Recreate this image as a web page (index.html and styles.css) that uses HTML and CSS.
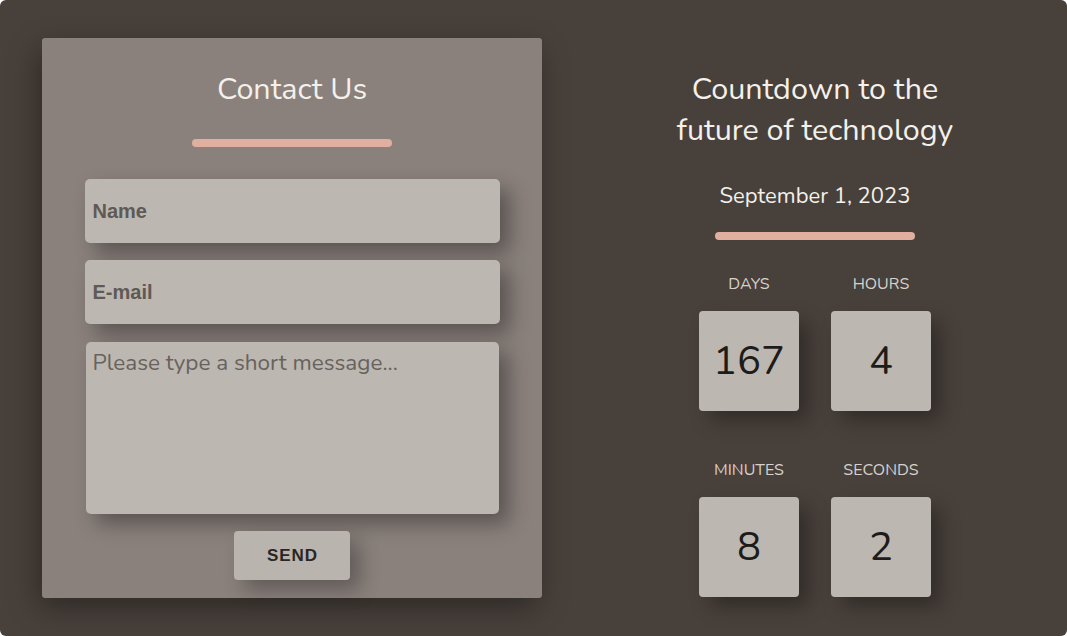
FILE: index.html
```html
<!DOCTYPE html>
<html lang="en">
<head>
<meta charset="utf-8">
<title>Contact & Countdown</title>
<link rel="stylesheet" href="styles.css">
</head>
<body>
<main class="page">
  <section class="card">
    <h2 class="card-title">Contact Us</h2>
    <div class="bar"></div>
    <form class="form">
      <input class="field" type="text" placeholder="Name">
      <input class="field" type="email" placeholder="E-mail">
      <textarea class="message" placeholder="Please type a short message..."></textarea>
      <button class="send" type="button">SEND</button>
    </form>
  </section>
  <section class="countdown">
    <h1 class="cd-title">Countdown to the<br>future of technology</h1>
    <p class="cd-date">September 1, 2023</p>
    <div class="bar bar-right"></div>
    <div class="grid">
      <div class="unit"><span class="label">DAYS</span><div class="box">167</div></div>
      <div class="unit"><span class="label">HOURS</span><div class="box">4</div></div>
      <div class="unit"><span class="label">MINUTES</span><div class="box">8</div></div>
      <div class="unit"><span class="label">SECONDS</span><div class="box">2</div></div>
    </div>
  </section>
</main>
</body>
</html>
```
FILE: styles.css
```css
html, body { margin: 0; padding: 0; background: #ffffff; }
body { font-family: "Nunito", "Lato", "Noto Sans", sans-serif; }
.page {
  width: 1067px;
  height: 636px;
  box-sizing: border-box;
  background: #48403b;
  border-radius: 6px;
  display: flex;
  align-items: flex-start;
  padding: 38px 0 0 42px;
}
.card {
  width: 500px;
  height: 560px;
  box-sizing: border-box;
  background: #8a817c;
  border-radius: 3px;
  box-shadow: -4px 10px 30px rgba(0,0,0,0.35);
  display: flex;
  flex-direction: column;
  align-items: center;
  padding-top: 33px;
}
.card-title {
  margin: 0;
  font-weight: 400;
  font-size: 30.5px;
  line-height: 36px;
  color: #f4f0ea;
}
.bar {
  width: 200px;
  height: 8px;
  border-radius: 4px;
  background: #e0afa0;
  margin-top: 32px;
}
.form {
  display: flex;
  flex-direction: column;
  align-items: center;
  margin-top: 32px;
}
.field {
  width: 415px;
  height: 64px;
  box-sizing: border-box;
  border: none;
  outline: none;
  border-radius: 5px;
  background: #bcb7b0;
  box-shadow: 10px 10px 20px rgba(0,0,0,0.35);
  padding: 0 8px;
  margin-bottom: 17px;
  font-family: "Liberation Sans", Arial, sans-serif;
  font-weight: 700;
  font-size: 20px;
  color: #3a3632;
}
.field::placeholder { color: #5f5a55; }
.message {
  width: 413px;
  height: 172px;
  box-sizing: border-box;
  border: none;
  outline: none;
  resize: none;
  border-radius: 5px;
  background: #bcb7b0;
  box-shadow: 10px 10px 20px rgba(0,0,0,0.35);
  padding: 7px 7px;
  margin-top: 1px;
  font-family: "Nunito", "Lato", "Noto Sans", sans-serif;
  font-size: 22.5px;
  line-height: 28px;
  color: #3a3632;
}
.message::placeholder { color: #67625d; }
.send {
  margin-top: 17px;
  width: 116px;
  height: 49px;
  border: none;
  border-radius: 4px;
  background: #b9b4ae;
  box-shadow: 10px 10px 20px rgba(0,0,0,0.3);
  font-family: "Liberation Sans", Arial, sans-serif;
  font-weight: 700;
  font-size: 17px;
  letter-spacing: 1px;
  color: #2a2624;
  padding: 0 0 0 1px;
}
.countdown {
  flex: 1;
  margin-left: 21px;
  display: flex;
  flex-direction: column;
  align-items: center;
  padding-top: 31px;
}
.cd-title {
  margin: 0;
  font-weight: 400;
  font-size: 30.5px;
  line-height: 41px;
  text-align: center;
  color: #f4f0ea;
}
.cd-date {
  margin: 31px 0 0;
  font-size: 22px;
  line-height: 28px;
  color: #f4f0ea;
}
.bar-right { margin-top: 22px; }
.grid {
  margin-top: 32px;
  display: grid;
  grid-template-columns: 100px 100px;
  column-gap: 32px;
  row-gap: 47px;
}
.unit {
  display: flex;
  flex-direction: column;
  align-items: center;
}
.label {
  font-size: 16px;
  line-height: 24px;
  color: #d6d1cb;
  margin-bottom: 15px;
}
.box {
  width: 100px;
  height: 100px;
  border-radius: 4px;
  background: #bcb7b0;
  box-shadow: 10px 10px 20px rgba(0,0,0,0.3);
  display: flex;
  align-items: center;
  justify-content: center;
  font-size: 40px;
  color: #1e1c1a;
}
```
